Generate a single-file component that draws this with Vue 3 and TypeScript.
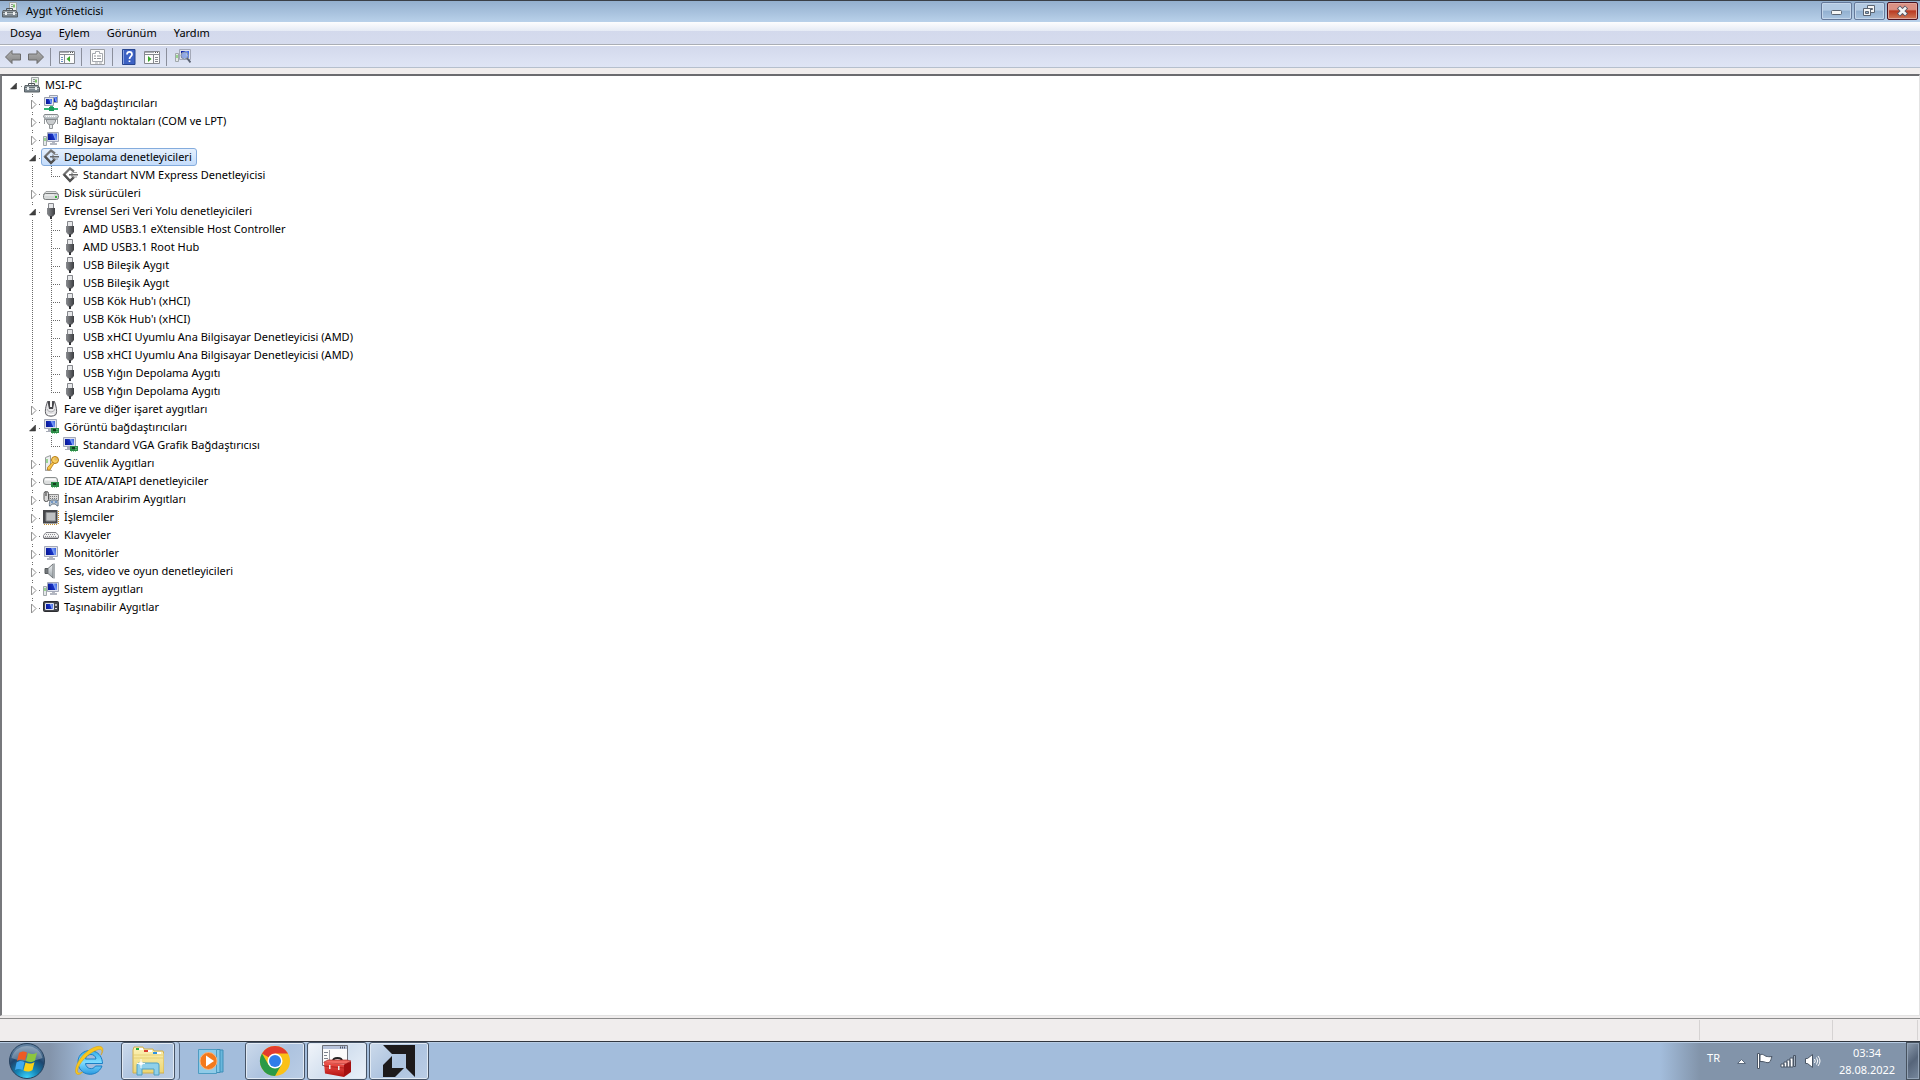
<script setup lang="ts">
import { reactive } from 'vue'

interface Device {
  label: string
  icon: string
  open?: boolean
  selected?: boolean
  children?: Device[]
}

const usb = (label: string): Device => ({ label, icon: 'usb' })

const root = reactive<Device>({
  label: 'MSI-PC',
  icon: 'host',
  open: true,
  children: [
    { label: 'Ağ bağdaştırıcıları', icon: 'network' },
    { label: 'Bağlantı noktaları (COM ve LPT)', icon: 'port' },
    { label: 'Bilgisayar', icon: 'computer' },
    {
      label: 'Depolama denetleyicileri',
      icon: 'storage',
      open: true,
      selected: true,
      children: [{ label: 'Standart NVM Express Denetleyicisi', icon: 'storage' }],
    },
    { label: 'Disk sürücüleri', icon: 'disk' },
    {
      label: 'Evrensel Seri Veri Yolu denetleyicileri',
      icon: 'usb',
      open: true,
      children: [
        usb('AMD USB3.1 eXtensible Host Controller'),
        usb('AMD USB3.1 Root Hub'),
        usb('USB Bileşik Aygıt'),
        usb('USB Bileşik Aygıt'),
        usb("USB Kök Hub'ı (xHCI)"),
        usb("USB Kök Hub'ı (xHCI)"),
        usb('USB xHCI Uyumlu Ana Bilgisayar Denetleyicisi (AMD)'),
        usb('USB xHCI Uyumlu Ana Bilgisayar Denetleyicisi (AMD)'),
        usb('USB Yığın Depolama Aygıtı'),
        usb('USB Yığın Depolama Aygıtı'),
      ],
    },
    { label: 'Fare ve diğer işaret aygıtları', icon: 'mouse' },
    {
      label: 'Görüntü bağdaştırıcıları',
      icon: 'display',
      open: true,
      children: [{ label: 'Standard VGA Grafik Bağdaştırıcısı', icon: 'display' }],
    },
    { label: 'Güvenlik Aygıtları', icon: 'security' },
    { label: 'IDE ATA/ATAPI denetleyiciler', icon: 'ide' },
    { label: 'İnsan Arabirim Aygıtları', icon: 'hid' },
    { label: 'İşlemciler', icon: 'cpu' },
    { label: 'Klavyeler', icon: 'keyboard' },
    { label: 'Monitörler', icon: 'monitor' },
    { label: 'Ses, video ve oyun denetleyicileri', icon: 'sound' },
    { label: 'Sistem aygıtları', icon: 'computer' },
    { label: 'Taşınabilir Aygıtlar', icon: 'portable' },
  ],
})

const menus = ['Dosya', 'Eylem', 'Görünüm', 'Yardım']

const toolGroups = [
  [
    { icon: 'back', label: 'Geri' },
    { icon: 'forward', label: 'İleri' },
  ],
  [{ icon: 'pane', label: 'Konsol ağacını göster/gizle' }],
  [{ icon: 'props', label: 'Özellikler' }],
  [
    { icon: 'help', label: 'Yardım' },
    { icon: 'action', label: 'Eylem bölmesi' },
  ],
  [{ icon: 'scan', label: 'Donanım değişikliklerini tara' }],
]
</script>

<template>
  <div class="desktop">
    <svg class="defs" aria-hidden="true">
      <defs>
        <linearGradient id="screen" x1="0" y1="0.3" x2="1" y2="0">
          <stop offset="0" stop-color="#0a1a9c" />
          <stop offset="0.5" stop-color="#1733c6" />
          <stop offset="0.6" stop-color="#7f9ff4" />
          <stop offset="1" stop-color="#2c57de" />
        </linearGradient>
        <linearGradient id="metal" x1="0" y1="0" x2="0" y2="1">
          <stop offset="0" stop-color="#f2f4f5" />
          <stop offset="1" stop-color="#9aa3a8" />
        </linearGradient>
        <linearGradient id="arrow" x1="0" y1="0" x2="0" y2="1">
          <stop offset="0" stop-color="#b0b0b0" />
          <stop offset="1" stop-color="#858585" />
        </linearGradient>
        <linearGradient id="plug" x1="0" y1="0" x2="1" y2="0">
          <stop offset="0" stop-color="#8a8c90" />
          <stop offset="0.5" stop-color="#636569" />
          <stop offset="1" stop-color="#3c3d40" />
        </linearGradient>
        <radialGradient id="orb" cx="0.5" cy="1" r="0.9">
          <stop offset="0" stop-color="#3fd8ff" />
          <stop offset="0.35" stop-color="#1587b8" />
          <stop offset="0.7" stop-color="#1d456e" />
          <stop offset="1" stop-color="#5f7f9f" />
        </radialGradient>
        <linearGradient id="ie" x1="0" y1="0" x2="0" y2="1">
          <stop offset="0" stop-color="#35aee8" />
          <stop offset="0.5" stop-color="#7fdcff" />
          <stop offset="1" stop-color="#2a9ae0" />
        </linearGradient>
        <linearGradient id="folder" x1="0" y1="0" x2="0" y2="1">
          <stop offset="0" stop-color="#fdf3b8" />
          <stop offset="1" stop-color="#ecd573" />
        </linearGradient>
        <linearGradient id="red" x1="0" y1="0" x2="0" y2="1">
          <stop offset="0" stop-color="#f0554c" />
          <stop offset="1" stop-color="#b3100f" />
        </linearGradient>
      </defs>

      <symbol id="i-host" viewBox="0 0 16 16">
        <path d="M7.500 .5h7v9h-7z" fill="#eceeed" stroke="#9ea4a4" />
        <path d="M9 2.500h2M9 4.500h2" stroke="#8d9494" />
        <path d="M11 2.500h2v3h-2z" fill="#7cc468" />
        <path d="M4.500 8V6.500h6V8" fill="none" stroke="#50565a" />
        <path d="M1 8.500h13l1.500 2.500H.5z" fill="#98a1a6" stroke="#596064" />
        <path d="M.5 11h15v4H.5z" fill="#7d8890" stroke="#565e63" />
        <path d="M1 11.500h14" stroke="#b7bfc3" />
        <path d="M3 10h2v3H3zM11 10h2v3h-2z" fill="#eef1f2" />
      </symbol>
      <symbol id="i-network" viewBox="0 0 16 16">
        <path d="M6.500 .5h8v7h-8z" fill="#e3e6ee" stroke="#9aa0ae" />
        <path d="M8 2h6v5H8z" fill="url(#screen)" />
        <path d="M1.500 2.500h9v8h-9z" fill="#e3e6ee" stroke="#9aa0ae" />
        <path d="M3 4h6v5H3z" fill="url(#screen)" />
        <path d="M7 11h3v2h5v2H1v-2h6z" fill="#2fb872" />
        <path d="M6 12h5v4H6z" fill="#1d9a5b" />
      </symbol>
      <symbol id="i-port" viewBox="0 0 16 16">
        <path d="M1.500 1.500h13l1 2-2 3h-11l-2-3z" fill="url(#metal)" stroke="#85898c" />
        <path d="M3 3.500h10" stroke="#fff" stroke-dasharray="1 1" />
        <path d="M3.500 6.500h9v2l-2 3h-5l-2-3z" fill="#c9ccce" stroke="#85898c" />
        <path d="M6.500 11.500h3v4h-3z" fill="#e4e6e7" stroke="#94989a" />
        <path d="M1.500 6v5M14.500 6v5" stroke="#94989a" />
      </symbol>
      <symbol id="i-computer" viewBox="0 0 16 16">
        <path d="M.5 5.500h3v9h-3z" fill="#e4e7e8" stroke="#a0a7aa" />
        <path d="M2 7v3" stroke="#4dc239" />
        <path d="M4.500 1.500h11v9h-11z" fill="#dfe2ec" stroke="#a4a9b8" />
        <path d="M5 2.500h9V9H5z" fill="url(#screen)" />
        <path d="M9 11h3v1h2v2H7v-2h2z" fill="#b4b8c2" />
      </symbol>
      <symbol id="i-storage" viewBox="0 0 16 16">
        <path d="M12 4.500 8 1.500 2 7.500 8 14l4-4" fill="none" stroke="#747474" stroke-width="2.200" />
        <path d="M2 7.500 8 14l4-4" fill="none" stroke="#505050" stroke-width="2.200" />
        <path d="M7 7h2.500V5.500h1V7H16v1.500h-5.500V10h-1V8.500H7z" fill="#666" />
        <path d="M11 5.500h4M11 10h4" stroke="#999" />
      </symbol>
      <symbol id="i-disk" viewBox="0 0 16 16">
        <path d="M3 6.500h10l2.500 3h-15z" fill="#e1e3e3" stroke="#a0a3a3" />
        <rect x=".5" y="8.500" width="15" height="6" rx="2" fill="#d5d8d8" stroke="#777b7b" />
        <path d="M2 10h9" stroke="#f5f5f5" />
        <path d="M12 11h2v2h-2z" fill="#36b036" />
      </symbol>
      <symbol id="i-usb" viewBox="0 0 16 16">
        <path d="M5.500 .5h5v5h-5z" fill="#e7e8ea" stroke="#85878c" />
        <path d="M4 5h8v6l-2 2.500H6L4 11z" fill="url(#plug)" />
        <path d="M7 13h2v3H7z" fill="#333438" />
      </symbol>
      <symbol id="i-mouse" viewBox="0 0 16 16">
        <path d="M4.500 .5C3 5 1.500 10 3 13.500q5 3.500 10 0c1.500-3.500 0-8.500-1.500-13z" fill="#e6e6e8" stroke="#5f5f64" />
        <path d="M4.500 .5 6 8h4l1.500-7.500z" fill="#47474b" />
        <path d="M7 0h2v6H7z" fill="#f7f7f7" />
        <path d="M4 8q1 3 4 3t4-3" fill="none" stroke="#aeaeb2" />
        <path d="M5 13.500h6" stroke="#fff" />
      </symbol>
      <symbol id="i-display" viewBox="0 0 16 16">
        <path d="M1.500 .5h12v9h-12z" fill="#dfe2ec" stroke="#a4a9b8" />
        <path d="M3 2h9v6H3z" fill="url(#screen)" />
        <path d="M5 10h4v1h1v2H3v-1h2z" fill="#a9adb8" />
        <path d="M8 9h8v5H8z" fill="#2a8a45" />
        <path d="M10 10h3v2h-3z" fill="#123e1e" />
        <path d="M14 10v3M9 14.500h6" stroke="#8ad39c" stroke-dasharray="1 1" />
      </symbol>
      <symbol id="i-security" viewBox="0 0 16 16">
        <path d="M2.500 2.500 7.500 .5v13l-5 2z" fill="#eceeee" stroke="#989c9c" />
        <path d="M4 4v4" stroke="#47bd3a" />
        <path d="M2 15.500h7" stroke="#aaa" />
        <circle cx="12" cy="5" r="3.500" fill="#f8cf62" stroke="#b57a12" />
        <circle cx="13" cy="4" r="1" fill="#fff" stroke="#b57a12" stroke-width=".6" />
        <path d="M9.500 7 4.500 12.500V15H7l1-2 3-4.500z" fill="#f6c34a" stroke="#b57a12" stroke-width=".8" />
      </symbol>
      <symbol id="i-ide" viewBox="0 0 16 16">
        <rect x=".5" y="4.500" width="14" height="7" rx="2.500" fill="#dcdede" stroke="#8b8f8f" />
        <path d="M2 6.500h11" stroke="#fafafa" stroke-width="2" />
        <path d="M8 9h8v5H8z" fill="#2a8a45" />
        <path d="M10 10h3v2h-3z" fill="#123e1e" />
        <path d="M9 14.500h6" stroke="#8ad39c" stroke-dasharray="1 1" />
      </symbol>
      <symbol id="i-hid" viewBox="0 0 16 16">
        <path d="M6 3.500h9.500v6H6z" fill="#ddd" stroke="#8a8a8a" />
        <path d="M7 5.500h8M7 7.500h8" stroke="#777" stroke-dasharray="1 1" />
        <rect x="1" y=".5" width="4.500" height="10" rx="2" fill="#dadada" stroke="#555" />
        <path d="M3 1v4" stroke="#333" />
        <path d="M6.500 15C6 11 7 9 8.500 9h4.500c2 0 2.500 2 2 6-2 0-2-2-3-2H9.500c-1 0-1 2-3 2z" fill="#b9c6d3" stroke="#60707f" />
        <path d="M8 11h2M12 11h2" stroke="#2c68b8" />
      </symbol>
      <symbol id="i-cpu" viewBox="0 0 16 16">
        <path d="M1 15.500h14M15.500 2v13" stroke="#c8922c" stroke-dasharray="1 1" />
        <path d="M0 1h14.500v13.500H0z" fill="#45464a" />
        <path d="M3 3.500h9.500v8.500H3z" fill="#bfc1c3" stroke="#85878a" />
      </symbol>
      <symbol id="i-keyboard" viewBox="0 0 16 16">
        <path d="M3 5.500h10l2.500 3v2.500h-15V8.500z" fill="#f3f3f3" stroke="#85858a" />
        <path d="M3 7.500h10M2 9.500h12" stroke="#8f8f94" stroke-dasharray="1 1" />
        <path d="M1 11.500h14" stroke="#5e5e62" />
      </symbol>
      <symbol id="i-monitor" viewBox="0 0 16 16">
        <path d="M1.500 1.500h13v10h-13z" fill="#dfe2ec" stroke="#a4a9b8" />
        <path d="M3 3h10v7H3z" fill="url(#screen)" />
        <path d="M6 12h4v1h2v2H4v-2h2z" fill="#b2b6c0" />
      </symbol>
      <symbol id="i-sound" viewBox="0 0 16 16">
        <path d="M2 5.500h3v5H2z" fill="#74797c" stroke="#565a5c" />
        <path d="M5 5.500 10 1v14L5 10.500z" fill="url(#metal)" stroke="#74797c" />
        <path d="M11 .5v15" stroke="#a9aeb1" stroke-width="2" />
      </symbol>
      <symbol id="i-portable" viewBox="0 0 16 16">
        <rect x=".5" y="2.500" width="15" height="10" rx="1" fill="#45474d" stroke="#2b2c30" />
        <path d="M2.500 4.500h8v6h-8z" fill="url(#screen)" stroke="#dfe2ea" />
        <circle cx="13" cy="6" r="1" fill="#dcdcdc" />
        <path d="M12 9.500h2" stroke="#dcdcdc" />
      </symbol>

      <symbol id="i-back" viewBox="0 0 16 16">
        <path d="M.5 8 7 1.500V5h8.500v6H7v3.500z" fill="url(#arrow)" stroke="#6c6c6c" />
      </symbol>
      <symbol id="i-forward" viewBox="0 0 16 16">
        <path d="M15.500 8 9 1.500V5H.5v6H9v3.500z" fill="url(#arrow)" stroke="#6c6c6c" />
      </symbol>
      <symbol id="i-pane" viewBox="0 0 16 16">
        <path d="M.5 2.500h15v12H.5z" fill="#fbfbfb" stroke="#85888f" />
        <path d="M1 3.500h9" stroke="#a9acb3" />
        <path d="M11 3.500h4" stroke="#555" stroke-dasharray="1 1" />
        <path d="M1 5.500h14M5.500 6v8" stroke="#85888f" />
        <path d="M2 8.500h2M2 10.500h2M2 12.500h2" stroke="#6b8fc4" />
        <path d="M11 7v6L7.500 10z" fill="#39a82c" />
      </symbol>
      <symbol id="i-props" viewBox="0 0 16 16">
        <path d="M.5 .5h14v15H.5z" fill="#fafafa" stroke="#9a9da3" />
        <path d="M2.500 4.500h3v-2h4v2h3v8h-10z" fill="#fff" stroke="#a5a8ae" />
        <path d="M4 7h2M7 7h4M4 9.500h2M7 9.500h4" stroke="#8f9298" />
        <path d="M5 14h3M9 14h3" stroke="#a5a8ae" />
      </symbol>
      <symbol id="i-help" viewBox="0 0 16 16">
        <path d="M1.500 .5h12.500v15H1.500z" fill="#3d62c4" stroke="#27458f" />
        <path d="M2.500 1v14" stroke="#89a2e0" />
        <path d="M6 5.500c0-3.500 5-3.500 5 0 0 2-2.500 2-2.500 4.500M8.500 11.500v1.500" fill="none" stroke="#fff" stroke-width="1.700" />
      </symbol>
      <symbol id="i-action" viewBox="0 0 16 16">
        <path d="M.5 2.500h15v12H.5z" fill="#fbfbfb" stroke="#85888f" />
        <path d="M1 3.500h9" stroke="#a9acb3" />
        <path d="M11 3.500h4" stroke="#555" stroke-dasharray="1 1" />
        <path d="M1 5.500h14M9.500 6v8" stroke="#85888f" />
        <path d="M11 8.500h3M11 10.500h3M11 12.500h3" stroke="#85888f" />
        <path d="M4 7v6L7.500 10z" fill="#39a82c" />
      </symbol>
      <symbol id="i-scan" viewBox="0 0 16 16">
        <path d="M.5 4.500h3v8h-3z" fill="#e4e7e8" stroke="#a0a7aa" />
        <path d="M2 6v3" stroke="#4dc239" />
        <path d="M4.500 .5h11v10h-11z" fill="#dfe2ec" stroke="#a4a9b8" />
        <path d="M6 2h8v7H6z" fill="url(#screen)" />
        <circle cx="9.500" cy="6.500" r="3.500" fill="#bcd4f6" fill-opacity=".75" stroke="#8892a4" />
        <path d="m12 9 3.500 4.500" stroke="#5c6474" stroke-width="2" />
      </symbol>
    </svg>

    <main class="window">
      <header class="titlebar">
        <svg class="icon"><use href="#i-host" /></svg>
        <h1>Aygıt Yöneticisi</h1>
        <div class="caption">
          <button class="cap" type="button" aria-label="Simge durumuna küçült">
            <svg width="29" height="16"><rect x="9.500" y="7.500" width="10" height="4" rx="1" fill="#f5f5f5" stroke="#5b6573" /></svg>
          </button>
          <button class="cap" type="button" aria-label="Önceki boyut">
            <svg width="29" height="16">
              <path d="M12.500 2.500h7v7h-7z" fill="#f5f5f5" stroke="#5b6573" />
              <path d="M15.500 5.500h2v1h-2z" fill="#8fadcb" stroke="#5b6573" />
              <path d="M8.500 5.500h7v7h-7z" fill="#f5f5f5" stroke="#5b6573" />
              <path d="M10.500 8.500h3v2h-3z" fill="#8fadcb" stroke="#5b6573" />
            </svg>
          </button>
          <button class="cap close" type="button" aria-label="Kapat">
            <svg width="29" height="16">
              <path d="m10.500 4 8 8m0-8-8 8" stroke="#535666" stroke-width="4.500" />
              <path d="m11 4.500 7 7m0-7-7 7" stroke="#f4f4f4" stroke-width="2.500" />
            </svg>
          </button>
        </div>
      </header>

      <nav class="menubar">
        <button v-for="m in menus" :key="m" type="button">{{ m }}</button>
      </nav>

      <div class="toolbar">
        <div v-for="(group, g) in toolGroups" :key="g" class="group">
          <button v-for="t in group" :key="t.icon" type="button" :aria-label="t.label">
            <svg class="icon"><use :href="'#i-' + t.icon" /></svg>
          </button>
        </div>
      </div>

      <section class="pane">
        <div class="row">
          <button class="toggle" type="button" aria-label="MSI-PC" @click="root.open = !root.open">
            <svg width="18" height="18">
              <path d="M12.500 7v6h-6z" fill="#404040" stroke="#262626" stroke-width=".5" />
              <path d="M17.500 10v1" stroke="#8c8c8c" />
            </svg>
          </button>
          <span class="item"><svg class="icon"><use href="#i-host" /></svg>{{ root.label }}</span>
        </div>
        <ul v-if="root.open" class="tree">
          <li v-for="(cat, i) in root.children" :key="i">
            <div class="row level1">
              <button class="toggle" type="button" :aria-label="cat.label" @click="cat.open = !cat.open">
                <svg width="18" height="18">
                  <path class="dots" d="M9.500 0v4" />
                  <path v-if="cat.open" d="M12.500 7v6h-6z" fill="#404040" stroke="#262626" stroke-width=".5" />
                  <path v-else d="M8.500 6v9l4.500-4.500z" fill="#fff" stroke="#8f8f8f" />
                  <path class="dots" d="M16 10.500h2" />
                </svg>
              </button>
              <span class="item" :class="{ selected: cat.selected }">
                <svg class="icon"><use :href="'#i-' + cat.icon" /></svg>{{ cat.label }}
              </span>
            </div>
            <ul v-if="cat.open && cat.children">
              <li v-for="(dev, d) in cat.children" :key="d" class="row level2">
                <svg class="guide" width="19" height="18"><path class="dots" d="M9.500 0v18" /></svg>
                <svg width="18" height="18">
                  <path class="dots" :d="d === cat.children.length - 1 ? 'M9.500 0v11' : 'M9.500 0v18'" />
                  <path class="dots" d="M11 10.500h7" />
                </svg>
                <span class="item"><svg class="icon"><use :href="'#i-' + dev.icon" /></svg>{{ dev.label }}</span>
              </li>
            </ul>
          </li>
        </ul>
      </section>

      <div class="status"><span class="fill"></span><span class="part wide"></span><span class="part"></span></div>
    </main>

    <footer class="taskbar">
      <button class="start" type="button" aria-label="Başlat">
        <svg width="38" height="38" viewBox="0 0 38 38">
          <circle cx="19" cy="19" r="17.500" fill="url(#orb)" stroke="#27425f" />
          <path d="M3.500 16a16 16 0 0 1 31 0c-9 4-22 4-31 0z" fill="#fff" fill-opacity=".28" />
          <path d="M11 11c3-2 5-2 8-.5l-2 8c-3-1.500-5-1.500-8 .5z" fill="#ee5a24" />
          <path d="M20 11c3 1.500 6 1.500 9-.5l-2 8c-3 2-6 2-9 .5z" fill="#8cc63e" />
          <path d="M8.500 20.500c3-2 5-2 8-.5l-2 8c-3-1.500-5-1.500-7.500 0z" fill="#3fa9f0" />
          <path d="M17.500 20.500c3 1.500 6 1.500 9-.5l-2 8c-3 2-6 2-9 .5z" fill="#fcd116" />
        </svg>
      </button>
      <button class="task ie" type="button" aria-label="Internet Explorer">
        <svg width="32" height="32" viewBox="0 0 32 32">
          <path d="M28.500 18.500H11.500c.5 5.500 7.500 7 10 2.500h6.500C23 34 4 31 4 17 4 2 28 1 28.500 18.500zM11.500 14h10.500c-.5-6-9.500-6-10.500 0z" fill="url(#ie)" stroke="#1b7fc4" />
          <path d="M27 10c2-4 1-7-4-5C14 8 5 18 3.500 25c-.5 3 1.500 4 5 2-2 3-7 4-7-1C1.500 17 12 4 23 1.500c7-1.500 7 4 4 8.500z" fill="#f9c81e" stroke="#d69a0c" stroke-width=".5" />
        </svg>
      </button>
      <button class="task framed stacked" type="button" aria-label="Windows Gezgini">
        <svg width="32" height="32" viewBox="0 0 32 32">
          <path d="M1 5 2 2h9l1 2h9l1 2h9l1 3v19H1z" fill="url(#folder)" stroke="#cfae4e" />
          <path d="M4 3h7v2H4z" fill="#21ad3c" /><path d="M7 3h4v2H7zM16 5h4v2h-4zM25 7h4v2h-4z" fill="#fff" />
          <path d="M12 5h4v2h-4z" fill="#d8402f" /><path d="M21 7h4v2h-4z" fill="#2d93e4" />
          <path d="M1 10h30M1 13h30" stroke="#dfc566" stroke-width=".7" />
          <path d="M5 30V20q0-2 2-2h18q2 0 2 2v10h-5v-6H10v6z" fill="#8fd0ea" stroke="#4e9fc4" />
          <path d="M9 14v9M5 18.500h8" stroke="#fff" stroke-width=".9" />
          <circle cx="9" cy="18.500" r="2" fill="#fff" fill-opacity=".8" />
        </svg>
      </button>
      <button class="task player" type="button" aria-label="Windows Media Player">
        <svg width="32" height="32" viewBox="0 0 32 32">
          <path d="M13 5h13v22H13z" fill="#69b7dc" stroke="#3e8fb8" />
          <path d="M9 4.500h14v23H9z" fill="#86c8e6" stroke="#3e8fb8" />
          <path d="M1.500 4.500h18v24h-18z" fill="#8fcbe8" stroke="#4d9cc2" />
          <circle cx="11.500" cy="16" r="8.500" fill="#f37a1c" stroke="#fbb37a" />
          <path d="M9 10.500v11l8-5.500z" fill="#fff" />
        </svg>
      </button>
      <button class="task framed" type="button" aria-label="Google Chrome">
        <svg width="32" height="32" viewBox="0 0 32 32">
          <circle cx="16" cy="16" r="15" fill="#fbc116" />
          <path d="M16 16 3 8.500A15 15 0 0 1 29 8.500H16z" fill="#e33b2e" />
          <path d="M3 8.500A15 15 0 0 0 16 31l6.500-11.500L16 16l-6.500 3.800z" fill="#2b9a47" />
          <circle cx="16" cy="16" r="7.500" fill="#fff" />
          <circle cx="16" cy="16" r="6" fill="#2f7de9" />
        </svg>
      </button>
      <button class="task framed active" type="button" aria-label="Aygıt Yöneticisi">
        <svg width="32" height="32" viewBox="0 0 32 32">
          <path d="M1.500 .5h25v20h-25z" fill="#fbfbfb" stroke="#6d7078" />
          <path d="M2 2.500h24" stroke="#b8c4dc" stroke-width="3" />
          <path d="M19 2.500h6" stroke="#4f5664" stroke-width="2" stroke-dasharray="1 1" />
          <path d="M8.500 5v13" stroke="#9a9da5" />
          <path d="M3 7.500h4M3 10.500h3M3 13.500h4" stroke="#7d838f" />
          <path d="M12 16c0-4 9-4 9 0" fill="none" stroke="#222" stroke-width="1.800" />
          <path d="m3 17 4-2h19l4 1-5 3-22-1z" fill="#f26b61" stroke="#a0100c" stroke-width=".6" />
          <path d="m3 17.500 20 2V32L4 28.500z" fill="url(#red)" />
          <path d="m23 19.500 7-3V27l-7 5z" fill="#a51010" />
          <path d="m3 21 20 2 7-4" fill="none" stroke="#a31513" stroke-width=".7" />
          <path d="M8 20h1.500v4H8zM17 21h1.500v4H17z" fill="#eceff0" />
        </svg>
      </button>
      <button class="task framed" type="button" aria-label="AMD">
        <svg width="32" height="32" viewBox="0 0 32 32">
          <path d="M0 0h32v32l-9-9V9H9z" fill="#1d1a1b" />
          <path d="M9 11v12h12l-9 9H0V20z" fill="#1d1a1b" />
        </svg>
      </button>

      <div class="tray">
        <span class="lang">TR</span>
        <button type="button" aria-label="Gizli simgeleri göster">
          <svg width="16" height="20"><path d="M3.500 12.500 7.500 8.500l4 4z" fill="#fff" stroke="#5c6b7e" /></svg>
        </button>
        <button type="button" aria-label="İşlem Merkezi">
          <svg width="18" height="20">
            <path d="M4 4c3-2 4 1 7 1.500 1 0 2 .5 5 0-1 2-1 5-3 6-3 1-4-1.500-9-1z" fill="#fff" stroke="#4a5666" />
            <path d="M1.500 2.500h2v15h-2z" fill="#fff" stroke="#4a5666" />
          </svg>
        </button>
        <button type="button" aria-label="Ağ">
          <svg width="18" height="20">
            <path d="M1 13h3v3H1zM4 11h3v5H4zM7 9h3v7H7zM10 7h3v9h-3z" fill="#fff" stroke="#4a5666" />
            <path d="M13.500 4.500h2v11h-2z" fill="#a6b2c1" stroke="#4a5666" />
          </svg>
        </button>
        <button type="button" aria-label="Ses düzeyi">
          <svg width="18" height="20">
            <path d="M1.500 7.500h2l5-4v13l-5-4h-2z" fill="#fff" stroke="#4a5666" />
            <path d="M10.500 8q1.500 2 0 4M12.500 6.500q2.500 3.500 0 7M14 5q4 5 0 10" fill="none" stroke="#fff" />
          </svg>
        </button>
        <div class="clock"><time>03:34</time><time>28.08.2022</time></div>
      </div>
      <button class="show-desktop" type="button" aria-label="Masaüstünü göster"></button>
    </footer>
  </div>
</template>

<style>
body {
  margin: 0;
}
</style>

<style scoped>
.desktop {
  display: flex;
  flex-direction: column;
  min-height: 100vh;
  background: #f0eded;
  color: #000;
  font: 11px/18px "Noto Sans", "Open Sans", sans-serif;
}
.defs {
  position: absolute;
  width: 0;
  height: 0;
}
button {
  margin: 0;
  padding: 0;
  border: 0;
  background: none;
  color: inherit;
  font: inherit;
}
svg {
  display: block;
  flex: none;
}
.icon {
  width: 16px;
  height: 16px;
}
.window {
  flex: 1;
  display: flex;
  flex-direction: column;
}
.titlebar {
  display: flex;
  align-items: flex-start;
  gap: 8px;
  height: 20px;
  padding: 1px 2px 0;
  border-top: 1px solid #3a3f47;
  background: linear-gradient(#93afce, #b9d1ea);
}
h1 {
  margin: 0;
  font-size: 11px;
  font-weight: 400;
}
.caption {
  display: flex;
  gap: 2px;
  margin-left: auto;
}
.cap {
  border: 1px solid #65799a;
  border-radius: 2px;
  box-shadow: inset 0 0 0 1px #c4d6ea;
  background: linear-gradient(#b3cae3 45%, #92b0d0 50%, #a9c4e0);
}
.cap.close {
  border-color: #4b1220;
  box-shadow: inset 0 0 0 1px #e0a79c;
  background: linear-gradient(#db9184 40%, #b93a22 50%, #d07a58);
}
.menubar {
  display: flex;
  gap: 17px;
  height: 22px;
  padding: 0 10px;
  border-bottom: 1px solid #aaaeb5;
  background: linear-gradient(#fdfdfe, #e6ebf5 40%, #d3d9ec 42%, #d6dcee);
  line-height: 22px;
}
.toolbar {
  display: flex;
  height: 21px;
  padding: 0 1px;
  border-top: 1px solid #fff;
  border-bottom: 1px solid #b5bfcd;
  background: linear-gradient(#d3d9ec, #dfe5f5);
}
.group {
  display: flex;
}
.group + .group::before {
  content: "";
  width: 1px;
  height: 18px;
  margin: 2px 4px 0 3px;
  background: #8b8f9c;
}
.group button {
  display: flex;
  align-items: center;
  width: 23px;
  padding-left: 4px;
}
.pane {
  flex: 1;
  margin-top: 6px;
  border: 2px solid #77787c;
  border-top-color: #6b6b6f;
  border-right: 1px solid #e3e3e3;
  border-bottom: 1px solid #e3e3e3;
  background: #fff;
}
ul {
  margin: 0;
  padding: 0;
  list-style: none;
}
.row {
  display: flex;
  height: 18px;
  padding-left: 2px;
}
.level1,
.level2 {
  padding-left: 21px;
}
.dots {
  fill: none;
  stroke: #6a6a6a;
  stroke-dasharray: 1 1;
}
.item {
  display: flex;
  align-items: center;
  gap: 5px;
  box-sizing: border-box;
  height: 18px;
  padding: 0 4px 0 1px;
  border: 1px solid transparent;
  border-radius: 3px;
  white-space: nowrap;
}
.item.selected {
  border-color: #84acdd;
  background: linear-gradient(#e6f0fd, #c4dcfb);
}
.status {
  display: flex;
  height: 20px;
  margin-top: 2px;
  padding: 1px 2px 1px 1px;
  border-top: 1px solid #8c8c8c;
  background: #f0eded;
}
.fill {
  flex: 1;
}
.part {
  width: 84px;
  border-left: 1px solid #d6d3d3;
}
.part.wide {
  width: 132px;
}
.part:last-child {
  border-right: 1px solid #d6d3d3;
}
.taskbar {
  display: flex;
  height: 38px;
  border-top: 1px solid #30363f;
  box-shadow: inset 0 1px #b7cbe2;
  background: linear-gradient(90deg, #8394ab 50px, #a3bddc 90px, #a3bddc calc(100% - 260px), #8294aa calc(100% - 220px));
}
.start {
  margin: 0 20px 0 8px;
}
.task {
  display: flex;
  align-items: center;
  justify-content: center;
  box-sizing: border-box;
  width: 60px;
  margin-right: 2px;
}
.ie {
  width: 48px;
  margin-right: 7px;
}
.player {
  width: 64px;
  margin-right: 0;
}
.framed {
  border: 1px solid #465467;
  border-radius: 3px;
  box-shadow: inset 0 0 0 1px #e1eaf4;
  background: linear-gradient(135deg, #ccdaeb, #adc3df 50%, #bacde5);
}
.framed.active {
  background: linear-gradient(135deg, #f1f5fa, #d3e0ef 50%, #eaf1f9);
}
.stacked {
  width: 54px;
  margin-right: 6px;
  box-shadow: inset 0 0 0 1px #e1eaf4, 4px 0 #b3c8e2, 5px 0 #5d6f88;
}
.tray {
  display: flex;
  align-items: center;
  margin-left: auto;
  color: #fff;
}
.lang {
  margin: 0 14px 6px 0;
}
.tray button + button {
  margin-left: 6px;
}
.clock {
  display: flex;
  flex-direction: column;
  width: 78px;
  margin-left: 6px;
  line-height: 17px;
  text-align: center;
}
.show-desktop {
  width: 14px;
  border: 1px solid #46525f;
  box-shadow: inset 0 0 0 1px #93a3b6;
  background: linear-gradient(135deg, #8d9cae, #56657a 50%, #78899e);
}
</style>
